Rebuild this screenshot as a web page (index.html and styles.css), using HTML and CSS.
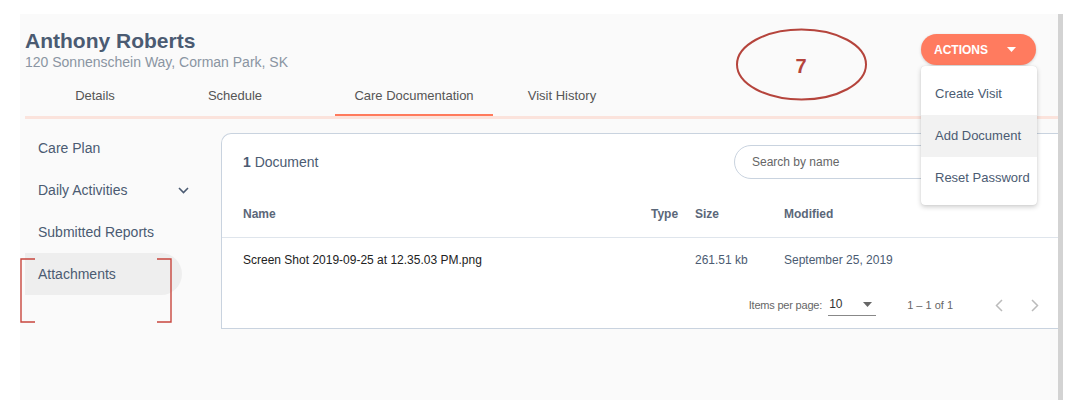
FILE: index.html
```html
<!DOCTYPE html>
<html lang="en">
<head>
    <meta charset="UTF-8">
    <meta name="viewport" content="width=device-width, initial-scale=1.0">
    <title>Client - Care Documentation</title>
    <link rel="stylesheet" href="styles.css">
</head>
<body>
    <div class="page">
        <div class="panel">
            <header class="header">
                <div class="header-top">
                    <div class="client">
                        <h1 class="client-name">Anthony Roberts</h1>
                        <p class="client-address">120 Sonnenschein Way, Corman Park, SK</p>
                    </div>
                    <div class="actions">
                        <button class="actions-btn" type="button">
                            <span>ACTIONS</span>
                            <svg width="9" height="5" viewBox="0 0 9 5"><path d="M0 0h9L4.5 5z" fill="#fff"/></svg>
                        </button>
                        <ul class="actions-menu">
                            <li>Create Visit</li>
                            <li class="hover">Add Document</li>
                            <li>Reset Password</li>
                        </ul>
                    </div>
                </div>
                <nav class="tabs">
                    <a class="tab">Details</a>
                    <a class="tab">Schedule</a>
                    <a class="tab tab-active">Care Documentation</a>
                    <a class="tab tab-last">Visit History</a>
                </nav>
            </header>

            <div class="main">
                <aside class="sidenav">
                    <div class="sidenav-item">Care Plan</div>
                    <div class="sidenav-item">
                        <span>Daily Activities</span>
                        <svg class="chevron" width="11" height="7" viewBox="0 0 11 7"><path d="M1 1l4.5 4.5L10 1" fill="none" stroke="#4b5b72" stroke-width="1.6"/></svg>
                    </div>
                    <div class="sidenav-item">Submitted Reports</div>
                    <div class="sidenav-item sidenav-active">Attachments</div>
                </aside>

                <section class="card">
                    <div class="card-top">
                        <div class="doc-count"><b>1</b> Document</div>
                        <input class="search" type="text" placeholder="Search by name">
                    </div>
                    <div class="table-row table-head">
                        <div>Name</div>
                        <div>Type</div>
                        <div>Size</div>
                        <div>Modified</div>
                    </div>
                    <div class="table-row table-data">
                        <div class="file-name">Screen Shot 2019-09-25 at 12.35.03 PM.png</div>
                        <div></div>
                        <div>261.51 kb</div>
                        <div>September 25, 2019</div>
                    </div>
                    <div class="paginator">
                        <span class="per-page-label">Items per page:</span>
                        <div class="per-page-select">
                            <span>10</span>
                            <svg width="9" height="5" viewBox="0 0 9 5"><path d="M0 0h9L4.5 5z" fill="#666"/></svg>
                        </div>
                        <span class="range">1 &ndash; 1 of 1</span>
                        <button class="page-btn" type="button">
                            <svg width="8" height="13" viewBox="0 0 8 13"><path d="M7 1L1.5 6.5 7 12" fill="none" stroke="#bbb" stroke-width="1.5"/></svg>
                        </button>
                        <button class="page-btn" type="button">
                            <svg width="8" height="13" viewBox="0 0 8 13"><path d="M1 1l5.5 5.5L1 12" fill="none" stroke="#bbb" stroke-width="1.5"/></svg>
                        </button>
                    </div>
                </section>
            </div>
        </div>

        <!-- red review marks drawn over the screenshot -->
        <svg class="annotations" width="1084" height="400" viewBox="0 0 1084 400">
            <ellipse cx="801.5" cy="64.5" rx="64.5" ry="35" fill="none" stroke="#b5443c" stroke-width="2"/>
            <text x="801" y="73" text-anchor="middle" class="mark-number">7</text>
            <path d="M35 259H21V322H35" fill="none" stroke="#c8463e" stroke-width="1.4"/>
            <path d="M157 259H171V322H157" fill="none" stroke="#c8463e" stroke-width="1.4"/>
        </svg>
    </div>
</body>
</html>
```

FILE: styles.css
```css
body {
    margin: 0;
    background: #fff;
    font-family: "Liberation Sans", Arial, sans-serif;
}

.page {
    position: relative;
    width: 1084px;
    height: 400px;
    overflow: hidden;
}

.panel {
    margin: 14px 0 0 20px;
    width: 1038px;
    height: 400px;
    background: #fafafa;
    border-right: 5px solid #d3d3d3;
}

/* header */
.header {
    padding: 14px 0 0 5px;
}

.header-top {
    display: flex;
    justify-content: space-between;
}

.client-name {
    margin: 0;
    font-size: 21px;
    line-height: 26px;
    font-weight: bold;
    color: #4b5b72;
}

.client-address {
    margin: 0;
    font-size: 14px;
    line-height: 16px;
    color: #8a95a2;
}

.actions {
    position: relative;
    margin: 6px 22px 0 0;
}

.actions-btn {
    display: flex;
    align-items: center;
    gap: 19px;
    height: 31px;
    padding: 0 20px 0 13px;
    border: none;
    border-radius: 16px;
    background: #ff7b5f;
    color: #fff;
    font-family: inherit;
    font-size: 12px;
    font-weight: bold;
    box-shadow: 0 1px 3px rgba(0, 0, 0, 0.18);
}

.actions-menu {
    position: absolute;
    top: 32px;
    left: 0;
    width: 116px;
    margin: 0;
    padding: 7px 0 6px;
    list-style: none;
    background: #fff;
    border-radius: 4px;
    box-shadow: 0 2px 5px rgba(0, 0, 0, 0.2), 0 0 1px rgba(0, 0, 0, 0.15);
    z-index: 2;
}

.actions-menu li {
    height: 42px;
    line-height: 42px;
    padding-left: 14px;
    font-size: 13px;
    color: #4b5b72;
}

.actions-menu li.hover {
    background: #f2f2f2;
}

.tabs {
    display: flex;
    border-bottom: 3px solid #fbe3dc;
}

.tab {
    width: 140px;
    padding: 18px 0 10px;
    line-height: 16px;
    text-align: center;
    font-size: 13px;
    color: #555;
    border-bottom: 2px solid transparent;
}

.tab-active {
    width: 158px;
    margin-left: 30px;
    border-bottom-color: #ff7a5c;
}

.tab-last {
    width: 138px;
}

/* body */
.main {
    display: flex;
    align-items: flex-start;
}

.sidenav {
    width: 201px;
    flex-shrink: 0;
    padding-top: 8px;
}

.sidenav-item {
    display: flex;
    align-items: center;
    box-sizing: border-box;
    width: 157px;
    height: 42px;
    margin-left: 5px;
    padding-left: 13px;
    font-size: 14px;
    color: #4b5b72;
    border-radius: 0 21px 21px 0;
}

.sidenav-item .chevron {
    margin-left: auto;
    margin-right: -7px;
}

.sidenav-active {
    background: #eeeeee;
}

.card {
    flex: 1;
    margin-top: 14px;
    background: #fff;
    border: 1px solid #c9d3df;
    border-right: none;
    border-radius: 10px 0 0 0;
}

.card-top {
    display: flex;
    justify-content: space-between;
    align-items: center;
    padding: 11px 24px 11px 21px;
}

.doc-count {
    font-size: 14px;
    color: #4b5b72;
}

.search {
    box-sizing: border-box;
    width: 300px;
    height: 34px;
    padding: 0 17px;
    border: 1px solid #c9d3df;
    border-radius: 17px;
    font-family: inherit;
    font-size: 12px;
    outline: none;
}

.search::placeholder {
    color: #666;
}

.table-row {
    display: grid;
    grid-template-columns: 408px 44px 89px 1fr;
    align-items: center;
    padding-left: 21px;
    font-size: 12px;
}

.table-head {
    height: 47px;
    font-weight: bold;
    color: #5b6779;
    border-bottom: 1px solid #dfe5ec;
}

.table-data {
    height: 44px;
    color: #4b5b72;
}

.file-name {
    color: #222;
}

.paginator {
    display: flex;
    justify-content: flex-end;
    align-items: center;
    height: 46px;
    padding-right: 5px;
    font-size: 11px;
    color: #666;
}

.per-page-label {
    letter-spacing: -0.2px;
}

.per-page-select {
    display: flex;
    justify-content: space-between;
    align-items: center;
    box-sizing: border-box;
    width: 48px;
    margin-left: 6px;
    padding: 3px 4px 4px 1px;
    border-bottom: 1px solid #888;
    color: #333;
    font-size: 12px;
}

.range {
    margin-left: 31px;
    margin-right: 28px;
}

.page-btn {
    display: flex;
    justify-content: center;
    align-items: center;
    width: 36px;
    height: 36px;
    padding: 0;
    border: none;
    background: none;
}

.annotations {
    position: absolute;
    top: 0;
    left: 0;
    pointer-events: none;
    z-index: 3;
}

.mark-number {
    font-family: "Liberation Sans", Arial, sans-serif;
    font-size: 20px;
    font-weight: bold;
    fill: #b5443c;
}
```
